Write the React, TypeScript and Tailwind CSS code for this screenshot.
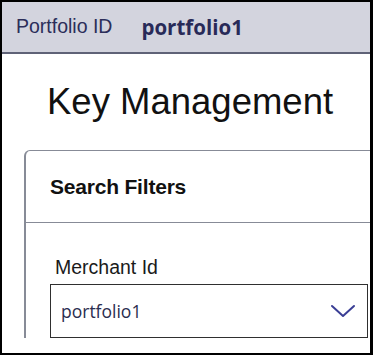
export default function App() {
  return (
    <div className="h-[355px] w-[373px] overflow-hidden border-t-2 border-l-2 border-r-[3px] border-b-2 border-black bg-white font-['Liberation_Sans',Arial,sans-serif]">
      <div className="flex h-[52px] items-center gap-[29px] border-b-2 border-[#5f6277] bg-[#d3d4de] pl-[14px]">
        <span className="text-[19.5px] text-[#2b2e5a]">Portfolio ID</span>
        <span className="font-['Open_Sans',sans-serif] text-[20.5px] font-bold text-[#282a58]">
          portfolio1
        </span>
      </div>

      <h1 className="mt-[27px] pl-[45px] text-[36.5px] leading-[42px] text-[#111]">Key Management</h1>

      <div className="mt-[27px] ml-[22px] w-[420px] rounded-tl-[6px] border-t-[1.5px] border-l-2 border-[#878b97]">
        <div className="flex h-[72px] items-center border-b-[1.5px] border-[#878b97] pl-[24px]">
          <h2 className="text-[21px] font-bold tracking-[-0.2px] text-[#111]">Search Filters</h2>
        </div>
        <div className="pt-[33px] pl-[24px]">
          <label className="block pl-[5px] text-[19.5px] leading-[22px] text-[#1a1a1a]">Merchant Id</label>
          <div className="mt-[6px] flex h-[54px] w-[318px] items-center justify-between border-[1.5px] border-[#2f2f2f] pl-[10px] pr-[11px]">
            <span className="font-['Open_Sans',sans-serif] text-[17.5px] text-[#2a2d4f]">portfolio1</span>
            <svg width="26" height="14" viewBox="0 0 26 14" fill="none" aria-hidden>
              <path d="M2 2l11 10 11-10" stroke="#3a3e95" strokeWidth="2" strokeLinecap="round" strokeLinejoin="round" />
            </svg>
          </div>
        </div>
      </div>
    </div>
  )
}
